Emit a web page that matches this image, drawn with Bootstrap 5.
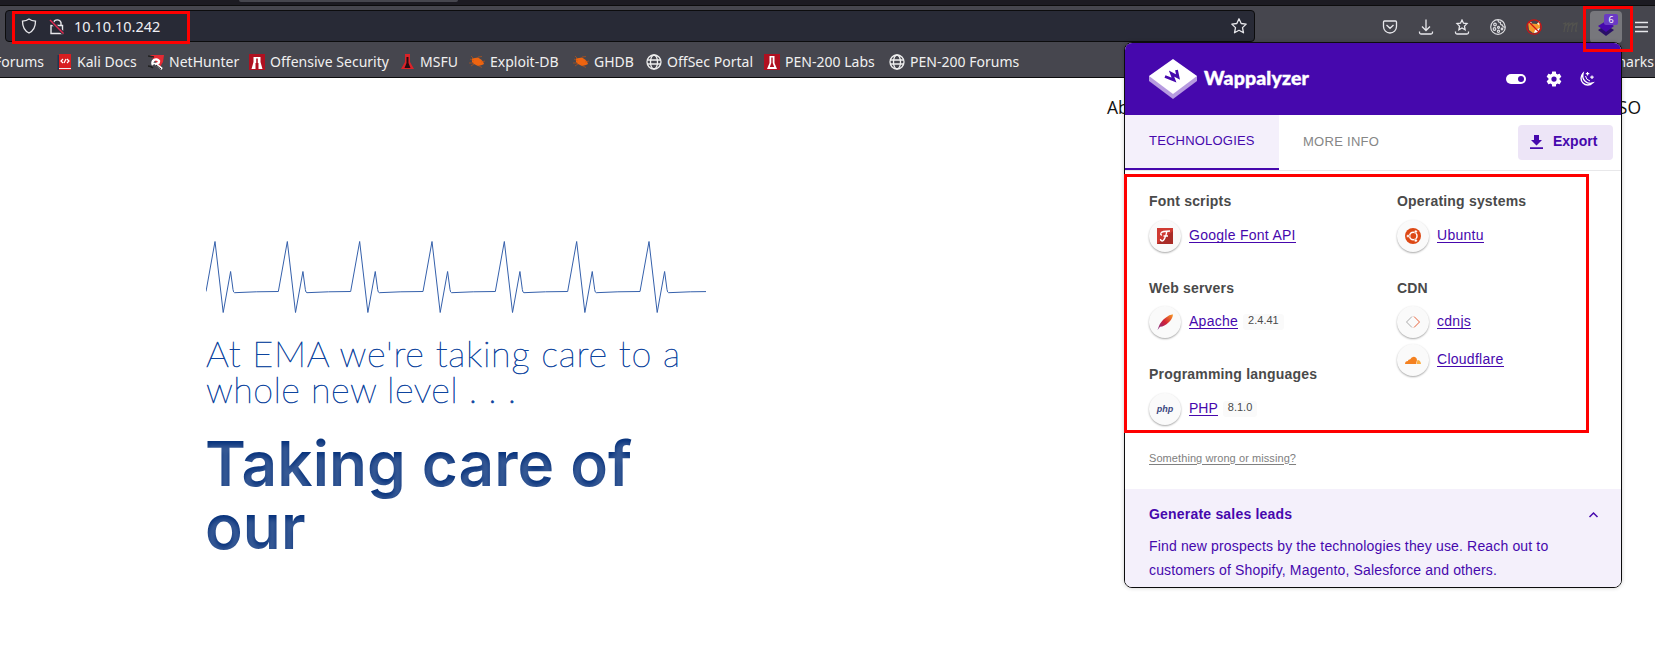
<!DOCTYPE html>
<html lang="en">
<head>
<meta charset="utf-8">
<title>EMA</title>
<link rel="stylesheet" href="https://cdn.jsdelivr.net/npm/bootstrap@5.3.0/dist/css/bootstrap.min.css">
<script src="https://cdn.jsdelivr.net/npm/bootstrap@5.3.0/dist/js/bootstrap.bundle.min.js"></script>
<style>
body{font-family:"Noto Sans",sans-serif;height:648px;overflow:hidden;background:#fff}
svg{display:block;flex:none}
.chrome{background:#46464e;color:#fbfbfe;height:78px;border-bottom:1px solid #0c0c0d}
.tabstrip{height:6px;background:#1c1b22;border-bottom:1px solid #0c0c0d}
.tabstrip i{display:block;width:219px;height:2px;margin-left:239px;background:#46464e;border-radius:0 0 3px 3px}
.toolbar{height:37px;padding:4px 6px 0 5px}
.urlbar{width:1250px;flex:none;height:32px;background:#282a36;border:1px solid #0c0c0d;border-radius:4px;font-size:14.5px;color:#f0f0f4}
.urlbar .shield{margin-left:15px}
.urlbar .host{margin:1px 0 0 3px}
.urlbar .star{margin:0 7px 0 auto}
.tools{margin-left:127px;gap:20px;flex:none}
.wapp-btn{width:32px;height:32px;border-radius:4px;background:#77777c;margin:0 -7px 0 -8px}
.count{left:14px;top:3px;width:14px;height:11px;border-radius:2px;background:#6a3bc4;font-size:9px;line-height:11px;text-align:center}
.bookmarks{height:36px;font-size:14px;line-height:20px;letter-spacing:.02px;color:#f0f0f0;grid-template-columns:44px 92px 101px 150px 70px 104px 73px 118px 125px 160px 1fr;padding:1px 1px 0 0}
.bookmarks>div{white-space:nowrap;display:flex;align-items:center}
.bookmarks .i{width:16px;height:16px;margin-right:5px}
.bookmarks .off{padding-left:12px}
.redbox{position:absolute;border:3px solid #fe0000;pointer-events:none;z-index:5}
.rb-url{left:12px;top:11px;width:178px;height:33px}
.rb-ext{left:1583px;top:6px;width:50px;height:46px}
.rb-tech{left:1124px;top:174px;width:465px;height:259px}
.sitenav{padding:17px 14px 0 1107px;font:400 17.5px/24px "Open Sans",sans-serif;color:#111}
.hero{padding:121px 0 0 206px;width:800px}
.tagline{font:100 36px/36px Lato,sans-serif;letter-spacing:.75px;color:#0d449e;-webkit-text-stroke:.6px #0d449e;margin:18.500px 0 0}
.tagline .l2{letter-spacing:.4px}
.claim{font:600 62px/63px Inter,sans-serif;margin:25px 0 0 -1px;background:#07327c;-webkit-background-clip:text;background-clip:text;color:transparent;text-shadow:0 4px 5px rgba(255,255,255,.2);letter-spacing:.12px}
.popup{position:absolute;left:1124px;top:42px;width:498px;height:546px;border:1px solid #0c0c0d;border-radius:8px;background:#fff;overflow:hidden;font-family:"Liberation Sans",Arial,sans-serif;font-size:14px;box-shadow:0 0 4px rgba(0,0,0,.2);z-index:2;color:#4a4a4a}
.phead{height:72px;background:#4608ad;padding:0 26px 0 24px;color:#fff}
.brand{font:900 19.5px/24px Lato,sans-serif;letter-spacing:.15px;margin:-3px 0 0 7px;-webkit-text-stroke:.4px #fff}
.toggle{margin-left:auto}
.gear{margin-left:18px}
.moon{margin-left:15px}
.ptabs{height:56px;border-bottom:1px solid #e8e8ea;font-size:13px}
.ptabs .on{width:154px;height:55px;background:#f4f0fb;border-bottom:2px solid #4608ad;color:#4608ad;padding:16px 0 0 24px;letter-spacing:.2px}
.ptabs .more{padding:17px 0 0 24px;color:#868686;letter-spacing:.28px}
.export{width:95px;height:35px;margin:10px 8px 0 0;background:#ede5f7;border-radius:4px;color:#4608ad;font-weight:700;font-size:14px;padding:0 0 2px 12px;gap:10px}
.techs{padding:22px 0 0 24px;height:275.5px}
.techs .c1{width:248px}
.cat{font-weight:700;line-height:16px;letter-spacing:.19px;height:26.5px}
.grp{height:86.5px}
.tech{height:38px}
.tech .ic{width:32px;height:32px;border-radius:50%;background:#fafafa;box-shadow:0 1px 2px rgba(0,0,0,.35);display:flex;align-items:center;justify-content:center;margin-right:8px;flex:none}
.tech a{color:#4608ad;text-decoration:none;border-bottom:1px solid #4608ad;line-height:14px;letter-spacing:.27px;margin-top:8px;height:15px}
.tech a.tight{letter-spacing:0}
.phpmark{font:italic 700 9px "Liberation Sans",sans-serif;color:#3b4880}
.ver{font-size:11px;line-height:13px;background:#fafafa;border-radius:3px;margin:8px 0 0 5px;padding:0 5px;height:16px}
.wrongrow{height:42px;padding:5px 0 0 24px;font-size:11px;line-height:13px;letter-spacing:.08px}
.wrongrow a{color:#808080;text-decoration:underline;text-underline-offset:2px}
.leads{background:#f4f0fb;color:#4608ad;height:100px;padding:17px 22px 0 24px;letter-spacing:.155px;line-height:24px}
.leads b{line-height:16px;letter-spacing:.2px}
.leads p{margin:12px 0 0;white-space:nowrap}
</style>
</head>
<body>
<header class="chrome">
  <div class="tabstrip"><i></i></div>
  <div class="toolbar d-flex">
    <div class="urlbar d-flex align-items-center">
      <svg class="shield" width="16" height="16" viewBox="0 0 16 16" fill="none" stroke="#e8e8ec" stroke-width="1.300"><path d="M8 1c2 1.500 4 2 6.500 2.200C14.500 9 12 13 8 15 4 13 1.500 9 1.500 3.200 4 3 6 2.500 8 1z"/></svg>
      <svg class="ms-2" width="26" height="17" viewBox="0 0 26 17" fill="none" stroke="#e8e8ec" stroke-width="1.400"><path d="M8.500 7V4.500a4 4 0 0 1 7.500 0V7M6 7.500h11.500v8H6z"/><path d="M4.500 2l14 13.500" stroke="#282a36" stroke-width="3.500"/><path d="M5 2l13.500 13.500" stroke="#e22850" stroke-width="1.400"/></svg>
      <span class="host">10.10.10.242</span>
      <svg class="star" width="16" height="16" viewBox="0 0 16 16" fill="none" stroke="#e8e8ec" stroke-width="1.300" stroke-linejoin="round"><path d="M8 .8l2.200 4.700 5 .6-3.700 3.500 1 5.200L8 12.300l-4.500 2.500 1-5.200L.8 6.100l5-.6z"/></svg>
    </div>
    <div class="tools d-flex align-items-center">
      <svg width="16" height="16" viewBox="0 0 16 16" fill="none" stroke="#e8e8ec" stroke-width="1.300"><path d="M2.500 2h11c.6 0 1 .4 1 1v4.500a6.500 6.500 0 0 1-13 0V3c0-.6.4-1 1-1zM4.500 6L8 9.300 11.500 6"/></svg>
      <svg width="16" height="16" viewBox="0 0 16 16" fill="none" stroke="#e8e8ec" stroke-width="1.300"><path d="M8 .5v11M4 7.500l4 4 4-4M1.500 12.500v1a1.500 1.500 0 0 0 1.500 1.500h10a1.500 1.500 0 0 0 1.500-1.500v-1"/></svg>
      <svg width="16" height="16" viewBox="0 0 16 16" fill="none" stroke="#e8e8ec" stroke-width="1.300"><path d="M8 1l1.500 3.200 3.500.4-2.500 2.500.6 3.600L8 9l-3.100 1.700.6-3.600L3 4.600l3.500-.4zM1.500 12.500v1a1.500 1.500 0 0 0 1.500 1.500h10a1.500 1.500 0 0 0 1.500-1.500v-1"/></svg>
      <svg width="16" height="16" viewBox="0 0 16 16" fill="none" stroke="#dddde0" stroke-width="1.200"><path d="M8 .7A7.300 7.300 0 1 0 15.300 8M8 .7q0 3 2.500 2.600Q10 6 12.500 6q0 2.500 2.800 2M8 .7q6 0 7.300 7.300"/><circle cx="5" cy="5.500" r="1.300"/><circle cx="4.500" cy="10" r="1.300"/><circle cx="8.500" cy="12.300" r="1.100"/><circle cx="8.500" cy="8.300" r="1"/><circle cx="12" cy="10" r=".8"/></svg>
      <svg width="16" height="16" viewBox="0 0 16 16" fill="none"><path d="M2 3l3 1.500 6 .5 3-3v6l-2 5-5 1-4-3z" fill="#f59a2e"/><path d="M9 11l5-2-2 4-4 1z" fill="#fff"/><path d="M3 2.500l3 1-2 2zM14 2.500l-3 2 2 2z" fill="#ffe9d0"/><circle cx="8" cy="8" r="7.200" stroke="#cf1313" stroke-width="1.300"/><path d="M3 3l10 10" stroke="#cf1313" stroke-width="1.300"/></svg>
      <svg width="16" height="16" viewBox="0 0 16 16" fill="none" stroke="#53534f" stroke-width="1.300"><path d="M1 5l2.500-1-1.500 9M3.500 7q2-3 3.500-3L5.500 13M7 7q2-3 4-3L9.500 13M11 7q2-3 4-3l-1.500 8 1.500 0"/></svg>
      <div class="wapp-btn position-relative d-flex align-items-center justify-content-center">
        <svg width="18" height="18" viewBox="0 0 18 18"><path d="M1 12l8-5 8 5-8 6z" fill="#2a1068"/><path d="M1 8l8-5 8 5-8 6z" fill="#4608ad"/></svg>
        <span class="count position-absolute">6</span>
      </div>
      <svg width="13" height="12" viewBox="0 0 13 12" stroke="#e8e8ec" stroke-width="1.400"><path d="M0 1.500h13M0 6h13M0 10.500h13"/></svg>
    </div>
  </div>
  <nav class="bookmarks d-grid align-items-center">
    <div class="justify-content-end">Kali Forums</div>
    <div class="off"><svg class="i" viewBox="0 0 16 16"><path d="M3 0h12v16H3z" fill="#d81e20"/><path d="M1.500 1H3v15H1.500z" fill="#23344f"/><path d="M3 14h12v1H3z" fill="#eee"/><path d="M7 5L5 7l2 2M8 9l2-4M11 5l2 2-2 2" stroke="#fff" stroke-width="1.200" fill="none"/></svg>Kali Docs</div>
    <div class="off"><svg class="i" viewBox="0 0 16 16"><path d="M2 1h14l-1 7-3 5z" fill="#e32a33"/><path d="M0 2l6 1M0 12q3 0 5 2" stroke="#222" stroke-width="1.500"/><path d="M5 11a3.500 3.500 0 1 1 6-4q0 3-3 3l6 5" fill="none" stroke="#fff" stroke-width="2.400"/><path d="M8 11l5 4" stroke="#222"/></svg>NetHunter</div>
    <div class="off"><svg class="i" viewBox="0 0 16 16"><path d="M0 0h16v16H0z" fill="#b01020"/><path d="M4.500 3h7v5l2 7H9.500V9h-3v6h-4l2-7z" fill="#fff"/><path d="M7.200 4.500h1.600V11H7.200z" fill="#b01020"/></svg>Offensive Security</div>
    <div class="off"><svg class="i" viewBox="0 0 16 16"><path d="M6 0h5v8l4 7H2l4-7z" fill="#dc2228"/><path d="M7.500 3h2v6l2 5h-6l2-5z" fill="#260c10"/></svg>MSFU</div>
    <div class="off"><svg class="i" viewBox="0 0 16 16"><path d="M3 4.500l3-.5 3-.5 3 2 2 2 1 2.500-2 1-4 1-4-2-2-2z" fill="#ee6410"/><path d="M1 5l4 2M0 9l5 0M9 3l4-.5M12 8l4-1M5 10l-3 2M8 11l5 2.500M2 2l3 3" stroke="#c9560f" stroke-width=".6"/></svg>Exploit-DB</div>
    <div class="off"><svg class="i" viewBox="0 0 16 16"><path d="M3 4.500l3-.5 3-.5 3 2 2 2 1 2.500-2 1-4 1-4-2-2-2z" fill="#ee6410"/><path d="M1 5l4 2M0 9l5 0M9 3l4-.5M12 8l4-1M5 10l-3 2M8 11l5 2.500M2 2l3 3" stroke="#c9560f" stroke-width=".6"/></svg>GHDB</div>
    <div class="off"><svg class="i" viewBox="0 0 16 16" fill="none" stroke="#eee" stroke-width="1.300"><circle cx="8" cy="8" r="7"/><ellipse cx="8" cy="8" rx="3.500" ry="7"/><path d="M1 6h14M1 10h14"/></svg>OffSec Portal</div>
    <div class="off"><svg class="i" viewBox="0 0 16 16"><path d="M0 0h16v16H0z" fill="#b01020"/><path d="M5.500 2h5v7l2.500 6H3l2.500-6z" fill="#fff"/><path d="M7.300 3.500h1.400V9l1.500 4H5.800l1.500-4z" fill="#b01020"/></svg>PEN-200 Labs</div>
    <div class="off"><svg class="i" viewBox="0 0 16 16" fill="none" stroke="#eee" stroke-width="1.300"><circle cx="8" cy="8" r="7"/><ellipse cx="8" cy="8" rx="3.500" ry="7"/><path d="M1 6h14M1 10h14"/></svg>PEN-200 Forums</div>
    <div class="justify-content-end">Other Bookmarks</div>
  </nav>
</header>

<main>
  <nav class="sitenav d-flex justify-content-between"><span>About</span><span>SO</span></nav>
  <section class="hero">
    <svg width="500" height="76" viewBox="0 0 500 76" fill="none" stroke="#3560ab" stroke-width="1">
      <defs><path id="beat" d="M0 51.500L9 1.500l8.200 71L24.600 31.500l2.400 18q.4 3.200 1.600 3.200Q50 51.500 72.330 51.500"/></defs>
      <use href="#beat"/><use href="#beat" x="72.330"/><use href="#beat" x="144.660"/><use href="#beat" x="217"/><use href="#beat" x="289.330"/><use href="#beat" x="361.660"/><use href="#beat" x="434"/>
    </svg>
    <p class="tagline">At EMA we're taking care to a<br><span class="l2">whole new level . . .</span></p>
    <h1 class="claim">Taking care of<br>our</h1>
  </section>
</main>

<aside class="popup">
  <div class="phead d-flex align-items-center">
    <svg width="48" height="42" viewBox="0 0 48 42"><path d="M0 18v5l24 18 24-18v-5z" fill="#b79be0"/><path d="M0 18L24 1l24 17-24 18z" fill="#fff"/><path d="M16 18.500l9 3.500-2.500-6.500L29 19l-1.500-7" fill="none" stroke="#4608ad" stroke-width="2.800"/></svg>
    <span class="brand">Wappalyzer</span>
    <svg class="toggle" width="21" height="12" viewBox="0 0 21 12"><rect y="1" width="20" height="10" rx="5" fill="#fff"/><circle cx="15" cy="6" r="3" fill="#4608ad"/></svg>
    <svg class="gear" width="18" height="18" viewBox="0 0 24 24" fill="#fff"><path d="M12 15.500A3.500 3.500 0 1 1 12 8.500a3.500 3.500 0 0 1 0 7m7.430-2.530c.04-.32.07-.64.07-.97s-.03-.66-.07-1l2.110-1.630c.19-.15.24-.42.12-.64l-2-3.460c-.12-.22-.39-.31-.61-.22l-2.490 1c-.52-.39-1.060-.73-1.690-.98l-.37-2.650A.5.5 0 0 0 14 2h-4c-.25 0-.46.18-.5.42l-.37 2.650c-.63.25-1.170.59-1.690.98l-2.490-1c-.22-.09-.49 0-.61.220l-2 3.460c-.13.22-.07.49.12.640L4.570 11c-.04.34-.07.67-.07 1s.03.65.07.970l-2.110 1.660c-.19.15-.25.42-.12.640l2 3.460c.12.220.39.300.61.220l2.490-1.010c.52.400 1.060.740 1.690.990l.37 2.650c.04.240.25.420.5.420h4c.25 0 .46-.18.5-.42l.37-2.650c.63-.26 1.170-.59 1.690-.99l2.490 1.010c.22.080.49 0 .61-.22l2-3.460c.12-.22.07-.49-.12-.64z"/></svg>
    <svg class="moon" width="17" height="17" viewBox="0 0 17 17" fill="none" stroke="#fff" stroke-width="1.400"><path d="M5 2.500A6.500 6.500 0 1 0 14.500 12C9 13.500 3.500 9 5 2.500z"/><path d="M7.500 5q.5 4 4.500 5" stroke-width="1"/><path d="M9.500 1v3.500M7.800 2.700h3.500M14 4.500V8M12.200 6.200h3.500" stroke-width="1.200"/></svg>
  </div>
  <div class="ptabs d-flex">
    <div class="on">TECHNOLOGIES</div>
    <div class="more">MORE INFO</div>
    <div class="export ms-auto d-flex align-items-center">
      <svg width="13" height="14" viewBox="0 0 13 14" fill="#4608ad"><path d="M4 0h5v5h3l-5.500 5.500L1 5h3zM0 12.300h13V14H0z"/></svg><span>Export</span>
    </div>
  </div>
  <div class="techs d-flex">
    <div class="c1">
      <div class="grp"><div class="cat">Font scripts</div>
        <div class="tech d-flex"><span class="ic"><svg width="16" height="16" viewBox="0 0 16 16"><path d="M0 0h16v16H0z" fill="#cf3a32"/><path d="M0 16L16 3v13z" fill="#a92c27"/><path d="M4 5q1-2 9-2M10 3q-2 9-4.500 10-2 0-2-2M6.500 8H11M4 5q-1 2 1 2" fill="none" stroke="#fff" stroke-width="1.300"/></svg></span><a href="#">Google Font API</a></div></div>
      <div class="grp"><div class="cat">Web servers</div>
        <div class="tech d-flex"><span class="ic"><svg width="16" height="16" viewBox="0 0 16 16"><defs><linearGradient id="fe" x1="0" y1="1" x2="1" y2="0"><stop offset="0" stop-color="#7b2a8c"/><stop offset=".5" stop-color="#d22236"/><stop offset="1" stop-color="#f79a23"/></linearGradient></defs><path d="M.5 16L2 12Q4 7 9 3.500 13 0 16 .5q-.5 4.500-4.500 8Q7.500 12.500 3 12.800z" fill="url(#fe)"/></svg></span><a href="#">Apache</a><span class="ver">2.4.41</span></div></div>
      <div class="grp"><div class="cat">Programming languages</div>
        <div class="tech d-flex"><span class="ic"><b class="phpmark">php</b></span><a href="#" class="tight">PHP</a><span class="ver">8.1.0</span></div></div>
    </div>
    <div>
      <div class="grp"><div class="cat">Operating systems</div>
        <div class="tech d-flex"><span class="ic"><svg width="16" height="16" viewBox="0 0 16 16"><circle cx="8" cy="8" r="8" fill="#dd4814"/><circle cx="8.300" cy="8" r="3.700" fill="none" stroke="#fff" stroke-width="1.500"/><g fill="#fff" stroke="#dd4814" stroke-width=".5"><circle cx="3" cy="8" r="1.500"/><circle cx="10.800" cy="3.500" r="1.500"/><circle cx="10.800" cy="12.500" r="1.500"/></g></svg></span><a href="#">Ubuntu</a></div></div>
      <div class="cat">CDN</div>
      <div class="tech d-flex"><span class="ic"><svg width="16" height="16" viewBox="0 0 16 16" fill="none"><path d="M7 2.500L1.500 8 7 13.500" stroke="#aaa"/><path d="M9 2.500L14.500 8 9 13.500" stroke="#e8623a"/></svg></span><a href="#">cdnjs</a></div>
      <div class="tech d-flex"><span class="ic"><svg width="16" height="16" viewBox="0 0 16 16"><path d="M0 12q0-3 3-3 0-2 2-1.500Q7 4 10 5q2 1 2 3l-1 4z" fill="#f48120"/><path d="M11.500 12l1-4q3 0 3.500 4z" fill="#faad3f"/></svg></span><a href="#">Cloudflare</a></div>
    </div>
  </div>
  <div class="wrongrow"><a href="#">Something wrong or missing?</a></div>
  <div class="leads">
    <div class="d-flex justify-content-between"><b>Generate sales leads</b><svg width="11" height="16" viewBox="0 0 11 16" fill="none" stroke="#4608ad" stroke-width="1.500"><path d="M1.500 11L5.500 7l4 4"/></svg></div>
    <p>Find new prospects by the technologies they use. Reach out to<br>customers of Shopify, Magento, Salesforce and others.</p>
  </div>
</aside>
<div class="redbox rb-url"></div>
<div class="redbox rb-ext"></div>
<div class="redbox rb-tech"></div>
</body>
</html>
